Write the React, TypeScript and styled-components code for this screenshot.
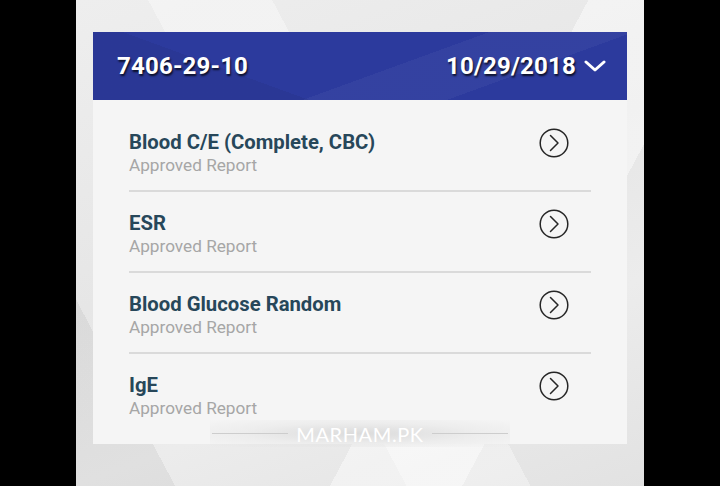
import styled, { createGlobalStyle } from 'styled-components';

const GlobalStyle = createGlobalStyle`
  html, body {
    margin: 0;
    padding: 0;
    background: #000;
  }
  * {
    box-sizing: border-box;
  }
`;

const Screen = styled.div`
  width: 720px;
  height: 486px;
  display: flex;
  justify-content: center;
  background: #000;
  overflow: hidden;
`;

const Phone = styled.div`
  position: relative;
  width: 568px;
  height: 486px;
  padding: 32px 17px 0;
  background:
    linear-gradient(118deg, transparent 0 62%, rgba(255, 255, 255, 0.45) 62% 78%, transparent 78%),
    linear-gradient(62deg, rgba(0, 0, 0, 0.05) 0 12%, transparent 12% 40%, rgba(255, 255, 255, 0.35) 40% 55%, transparent 55%),
    linear-gradient(160deg, #eeeeee 0%, #e6e6e6 45%, #ececec 70%, #e2e2e2 100%);
  font-family: Roboto, 'Noto Sans', Arial, sans-serif;
`;

const Card = styled.div`
  width: 534px;
  height: 412px;
  background: #f5f5f5;
  display: flex;
  flex-direction: column;
`;

const Header = styled.div`
  height: 68px;
  flex-shrink: 0;
  display: flex;
  align-items: center;
  justify-content: space-between;
  padding: 0 21px 0 24px;
  background:
    linear-gradient(160deg, transparent 0 55%, rgba(255, 255, 255, 0.04) 55% 75%, transparent 75%),
    linear-gradient(20deg, rgba(0, 0, 0, 0.05) 0 30%, transparent 30%),
    #2c3a9d;
`;

const HeaderText = styled.span`
  color: #fff;
  font-size: 24px;
  font-weight: 700;
  letter-spacing: 0.2px;
  text-shadow: 1px 2px 2px rgba(0, 0, 0, 0.75);
`;

const DateGroup = styled.div`
  display: flex;
  align-items: center;
  gap: 8px;
`;

const List = styled.div`
  display: flex;
  flex-direction: column;
  padding: 11px 36px 0;
`;

const Row = styled.div<{ $last?: boolean }>`
  display: flex;
  align-items: flex-start;
  justify-content: space-between;
  padding: 20px 0 13px;
  border-bottom: ${(p) => (p.$last ? 'none' : '2px solid #dadada')};
`;

const TextBlock = styled.div`
  display: flex;
  flex-direction: column;
`;

const Title = styled.div`
  color: #27475a;
  font-size: 20.3px;
  font-weight: 700;
  line-height: 23px;
`;

const Subtitle = styled.div`
  color: #a6a6a6;
  font-size: 17.2px;
  line-height: 23px;
`;

const ArrowButton = styled.div`
  width: 30px;
  height: 30px;
  margin: -3px 22px 0 0;
  display: flex;
`;

const Watermark = styled.div`
  position: absolute;
  left: 134px;
  top: 420px;
  width: 300px;
  height: 27px;
  display: flex;
  align-items: center;
  gap: 8px;
  padding: 0 2px;
  background: radial-gradient(ellipse at center, rgba(205, 205, 205, 0.65) 0%, rgba(225, 225, 225, 0.4) 55%, rgba(240, 240, 240, 0) 100%);
`;

const WatermarkLine = styled.div`
  flex: 1;
  height: 1px;
  background: #cdcdcd;
`;

const WatermarkText = styled.span`
  color: #fff;
  font-family: Lato, 'Noto Sans', sans-serif;
  font-size: 20px;
  font-weight: 400;
  letter-spacing: 0.6px;
`;

const Chevron = () => (
  <svg width="22" height="12" viewBox="0 0 22 12">
    <path d="M2 2 L11 10 L20 2" fill="none" stroke="#fff" strokeWidth="3" strokeLinecap="round" strokeLinejoin="round" />
  </svg>
);

const CircleArrow = () => (
  <svg width="30" height="30" viewBox="0 0 30 30">
    <circle cx="15" cy="15" r="13.8" fill="none" stroke="#262626" strokeWidth="1.5" />
    <path d="M11.5 7.5 L19 15 L11.5 22.5" fill="none" stroke="#262626" strokeWidth="1.5" strokeLinecap="round" strokeLinejoin="round" />
  </svg>
);

const reports = ['Blood C/E (Complete, CBC)', 'ESR', 'Blood Glucose Random', 'IgE'];

const App = () => {
  return (
    <>
      <GlobalStyle />
      <Screen>
        <Phone>
          <Card>
            <Header>
              <HeaderText>7406-29-10</HeaderText>
              <DateGroup>
                <HeaderText>10/29/2018</HeaderText>
                <Chevron />
              </DateGroup>
            </Header>
            <List>
              {reports.map((name, i) => (
                <Row key={name} $last={i === reports.length - 1}>
                  <TextBlock>
                    <Title>{name}</Title>
                    <Subtitle>Approved Report</Subtitle>
                  </TextBlock>
                  <ArrowButton>
                    <CircleArrow />
                  </ArrowButton>
                </Row>
              ))}
            </List>
          </Card>
          <Watermark>
            <WatermarkLine />
            <WatermarkText>MARHAM.PK</WatermarkText>
            <WatermarkLine />
          </Watermark>
        </Phone>
      </Screen>
    </>
  );
};

export default App;
